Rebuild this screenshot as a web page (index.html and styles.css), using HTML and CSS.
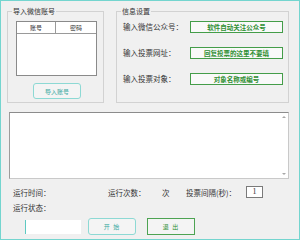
FILE: index.html
```html
<!DOCTYPE html>
<html lang="zh-CN">
<head>
    <meta charset="UTF-8">
    <title>投票助手</title>
    <link rel="stylesheet" href="styles.css">
</head>
<body>
    <div class="window">
        <div class="top">
            <fieldset class="group group-account">
                <legend>导入微信账号</legend>
                <div class="list">
                    <div class="list-head">
                        <span class="col col-user">账号</span>
                        <span class="col">密码</span>
                    </div>
                </div>
                <button class="btn btn-import">导入账号</button>
            </fieldset>

            <fieldset class="group group-info">
                <legend>信息设置</legend>
                <div class="form">
                    <label>输入微信公众号：</label>
                    <div class="box">软件自动关注公众号</div>
                    <label>输入投票网址：</label>
                    <div class="box">回复投票的这里不要填</div>
                    <label>输入投票对象：</label>
                    <div class="box">对象名称或编号</div>
                </div>
            </fieldset>
        </div>

        <div class="log">
            <div class="log-body"></div>
            <div class="scroll">
                <span class="arrow arrow-up"></span>
                <span class="arrow arrow-down"></span>
            </div>
        </div>

        <div class="status">
            <span class="st-time">运行时间：</span>
            <span class="st-count">运行次数：</span>
            <span class="st-unit">次</span>
            <span class="st-gap">投票间隔(秒)：</span>
            <span class="num">1</span>
        </div>
        <div class="status2">运行状态：</div>

        <div class="actions">
            <div class="field"></div>
            <button class="btn btn-start">开 始</button>
            <button class="btn-exit">退 出</button>
        </div>
    </div>
</body>
</html>
```

FILE: styles.css
```css
body {
    margin: 0;
    font-family: "Noto Sans CJK SC", "Noto Sans", sans-serif;
    color: #333;
}
.window {
    width: 300px;
    height: 240px;
    box-sizing: border-box;
    border: 1px solid #74d5cf;
    background: #f0f0f0;
    padding: 5px 0 0 6px;
}
.top {
    display: flex;
    gap: 12px;
}
.group {
    margin: 0;
    padding: 0;
    min-width: 0;
    height: 97px;
    box-sizing: border-box;
    border: 1px solid #d2d2d2;
}
.group legend {
    margin-left: 4px;
    padding: 0 1px;
    font-size: 7px;
    line-height: 10px;
}
.group-account {
    width: 97px;
}
.group-info {
    width: 173px;
}

/* 账号列表 */
.list {
    margin: 5px 0 0 8px;
    width: 81px;
    height: 55px;
    box-sizing: border-box;
    border: 1px solid #8a8a8a;
    background: #fff;
}
.list-head {
    display: flex;
    height: 11px;
    border-bottom: 1px solid #9a9a9a;
    font-size: 6px;
    line-height: 11px;
}
.col {
    flex: 1;
    text-align: center;
}
.col-user {
    flex: none;
    width: 38px;
    border-right: 1px solid #9a9a9a;
}

.btn {
    display: block;
    width: 48px;
    height: 16px;
    padding: 0;
    border: 1px solid #8dd9d4;
    border-radius: 3px;
    background: #f4f4f4;
    color: #3aa9a1;
    font-family: inherit;
    font-size: 6px;
}
.btn-import {
    margin: 7px 0 0 25px;
}

/* 信息设置 */
.form {
    display: grid;
    grid-template-columns: 67px 93px;
    grid-auto-rows: 12px;
    row-gap: 14px;
    margin: 5px 0 0 6px;
    align-items: center;
}
.form label {
    font-size: 7.5px;
    line-height: 12px;
}
.box {
    height: 12px;
    box-sizing: border-box;
    border: 1px solid #449d49;
    background: #f9f9f9;
    color: #2f8f33;
    font-size: 6.5px;
    font-weight: bold;
    line-height: 10px;
    text-align: center;
}

/* 日志框 */
.log {
    display: flex;
    margin: 9px 0 0 2px;
    width: 280px;
    height: 67px;
    box-sizing: border-box;
    border: 1px solid #c9c9c9;
    border-top-color: #8c8c8c;
    border-left-color: #9c9c9c;
    background: #fff;
}
.log-body {
    flex: 1;
}
.scroll {
    width: 9px;
    display: flex;
    flex-direction: column;
    justify-content: space-between;
    align-items: center;
    padding: 3px 0;
    box-sizing: border-box;
}
.arrow {
    width: 0;
    height: 0;
    border-left: 2px solid transparent;
    border-right: 2px solid transparent;
}
.arrow-up {
    border-bottom: 2px solid #a8a8a8;
}
.arrow-down {
    border-top: 2px solid #a8a8a8;
}

/* 状态 */
.status {
    display: flex;
    align-items: center;
    margin: 7px 0 0 6px;
    height: 12px;
    font-size: 7.5px;
}
.st-time { width: 95px; }
.st-count { width: 54px; }
.st-unit { width: 24px; }
.st-gap { width: 60px; }
.num {
    width: 17px;
    height: 12px;
    box-sizing: border-box;
    border: 1px solid #7a7a7a;
    background: #fff;
    font-family: "Liberation Serif", serif;
    font-size: 8px;
    line-height: 10px;
    text-align: center;
}
.status2 {
    margin: 5px 0 0 6px;
    height: 10px;
    font-size: 7.5px;
    line-height: 10px;
}

.actions {
    display: flex;
    align-items: center;
    margin-top: 5px;
    height: 17px;
}
.field {
    margin-left: 18px;
    width: 56px;
    height: 14px;
    box-sizing: border-box;
    border-left: 1px solid #5fc9c2;
    background: #fff;
}
.btn-start {
    margin-left: 7px;
    height: 17px;
    letter-spacing: 1px;
}
.btn-exit {
    margin-left: 11px;
    width: 48px;
    height: 17px;
    padding: 0;
    border: 1px solid #4da352;
    background: #f4f4f4;
    color: #2f8f33;
    font-family: inherit;
    font-size: 6px;
    letter-spacing: 1px;
}
```
